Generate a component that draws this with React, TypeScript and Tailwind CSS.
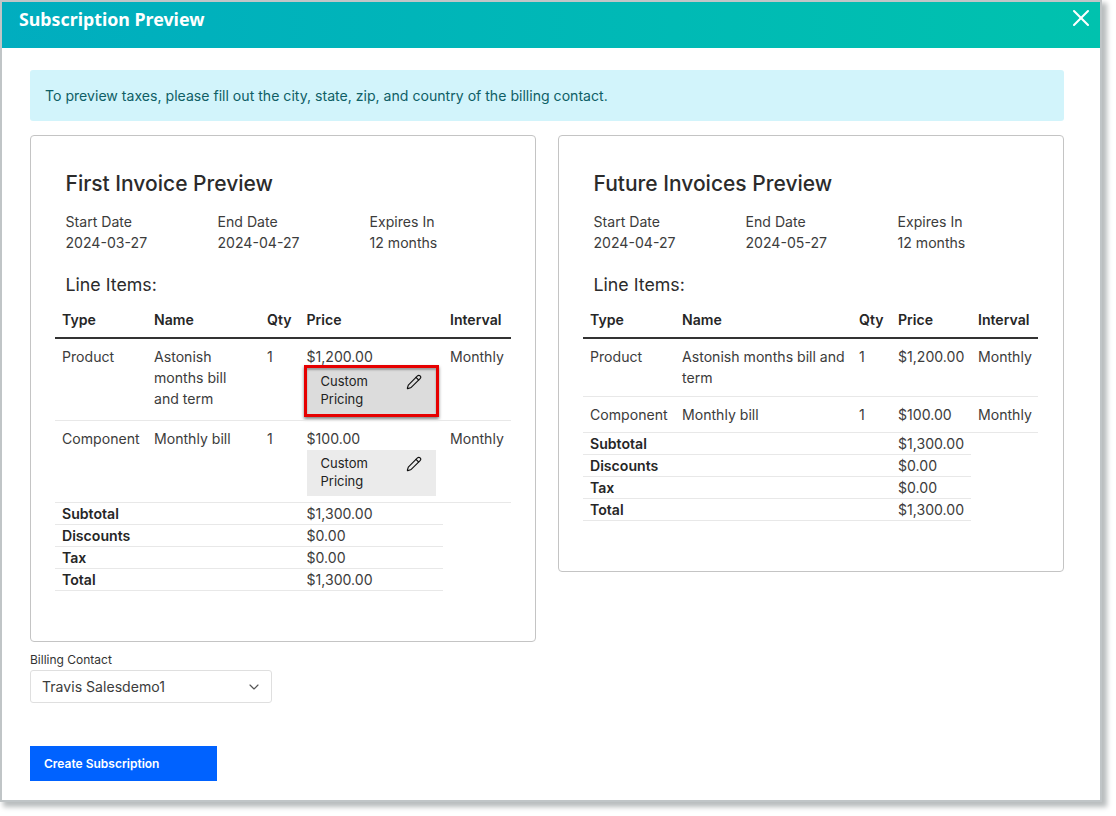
import { ChevronDown, Pencil, X } from "lucide-react"

type Item = { type: string; name: string; price: string; interval: string }

const totals = [
  { label: "Subtotal", value: "$1,300.00" },
  { label: "Discounts", value: "$0.00" },
  { label: "Tax", value: "$0.00" },
  { label: "Total", value: "$1,300.00" },
]

const items: Item[] = [
  { type: "Product", name: "Astonish months bill and term", price: "$1,200.00", interval: "Monthly" },
  { type: "Component", name: "Monthly bill", price: "$100.00", interval: "Monthly" },
]

const CustomPricing = ({ highlighted }: { highlighted?: boolean }) => (
  <div
    className={
      "mt-[1px] mb-[6px] flex h-[46px] w-[129px] items-start justify-between pl-[14px] pr-[14px] pt-[1px] text-[13px] leading-[18px] text-[#222] " +
      (highlighted
        ? "bg-[#dcdcdc] outline-[3px] outline-[#e60000] shadow-[0_2px_3px_3px_rgba(0,0,0,0.5),inset_0_2px_2px_rgba(0,0,0,0.3)]"
        : "bg-[#ebebeb]")
    }
  >
    <span className="w-[60px] pt-[3px]">Custom Pricing</span>
    <Pencil size={16} strokeWidth={1.7} className="mt-[5px] text-[#111]" />
  </div>
)

const InvoiceTable = ({ widths, editable }: { widths: number[]; editable?: boolean }) => (
  <table className="border-collapse table-fixed text-[14.1px] leading-[21px] text-[#3c3c3c]" style={{ width: widths.reduce((a, b) => a + b, 0) }}>
    <colgroup>
      {widths.map((w, i) => (
        <col key={i} style={{ width: w }} />
      ))}
    </colgroup>
    <thead>
      <tr className="border-b-[2px] border-[#333] text-left text-[#262626]">
        <th className="h-[36px] px-[7px] font-semibold">Type</th>
        <th className="px-[7px] font-semibold">Name</th>
        <th className="px-[7px] font-semibold">Qty</th>
        <th className="px-[7px] font-semibold">Price</th>
        <th className="px-[7px] font-semibold">Interval</th>
      </tr>
    </thead>
    <tbody>
      {items.map((item, i) => (
        <tr key={item.type} className="border-b border-[#e8e8e8] align-top">
          <td className="px-[7px] pt-[7px] pb-[7px]">{item.type}</td>
          <td className={"px-[7px] pt-[7px] " + (i === 0 ? "pb-[8px]" : "pb-[7px]")}>{item.name}</td>
          <td className="px-[7px] pt-[7px] pb-[7px]">1</td>
          <td className="px-[7px] pt-[7px] pb-0">
            {item.price}
            {editable && <CustomPricing highlighted={i === 0} />}
          </td>
          <td className="px-[7px] pt-[7px] pb-[7px]">{item.interval}</td>
        </tr>
      ))}
      {totals.map((row) => (
        <tr key={row.label} className="h-[22px]">
          <td colSpan={3} className="border-b border-[#e8e8e8] px-[7px] py-0 font-semibold text-[#262626]">
            {row.label}
          </td>
          <td className="border-b border-[#e8e8e8] px-[7px] py-0">{row.value}</td>
          <td />
        </tr>
      ))}
    </tbody>
  </table>
)

const PreviewCard = ({
  title,
  start,
  end,
  widths,
  height,
  editable,
}: {
  title: string
  start: string
  end: string
  widths: number[]
  height: string
  editable?: boolean
}) => (
  <div className={"w-[506px] rounded-[4px] border border-[#c4c4c4] pt-[34px] pl-[24px] " + height}>
    <h2 className="pl-[10.5px] text-[21px] font-medium leading-[28px] text-[#2b2b2b]">{title}</h2>
    <div className="mt-[13px] grid w-[390px] grid-cols-[152px_152px_1fr] pl-[10.5px] text-[14.1px] leading-[21px] text-[#3c3c3c]">
      <div>
        <div>Start Date</div>
        <div>{start}</div>
      </div>
      <div>
        <div>End Date</div>
        <div>{end}</div>
      </div>
      <div>
        <div>Expires In</div>
        <div>12 months</div>
      </div>
    </div>
    <div className="mt-[20px] pl-[10.5px] text-[17.8px] leading-[24px] text-[#2b2b2b]">Line Items:</div>
    <div className="mt-[5px]">
      <InvoiceTable widths={widths} editable={editable} />
    </div>
  </div>
)

export default function App() {
  return (
    <div className="h-[816px] w-[1116px] overflow-hidden bg-white pl-[2px] pt-[2px] font-['Inter',sans-serif]">
      <div className="flex h-[798px] w-[1098px] flex-col bg-white shadow-[0_0_0_2px_#c0c5c7,4px_4px_5px_3px_rgba(185,189,190,1)]">
        <header className="flex h-[46px] shrink-0 items-start justify-between bg-gradient-to-r from-[#01adbf] to-[#00c2ae] pl-[17px] pr-[5px]">
          <span className="pt-[5px] font-['Noto_Sans',sans-serif] text-[17.8px] font-bold leading-[24px] text-white">
            Subscription Preview
          </span>
          <X size={28} strokeWidth={1.8} className="mt-[2px] text-white" />
        </header>
        <main className="flex flex-1 flex-col pl-[28px] pr-[36px] pt-[22px]">
          <div className="flex h-[51px] items-center rounded-[3px] bg-[#d2f4fb] pl-[15px] text-[14.1px] text-[#0f5f66]">
            To preview taxes, please fill out the city, state, zip, and country of the billing contact.
          </div>
          <div className="mt-[14px] flex items-start gap-[22px]">
            <PreviewCard
              title="First Invoice Preview"
              start="2024-03-27"
              end="2024-04-27"
              widths={[92, 113, 39.5, 143.5, 68]}
              height="h-[507px]"
              editable
            />
            <PreviewCard
              title="Future Invoices Preview"
              start="2024-04-27"
              end="2024-05-27"
              widths={[92, 177, 39, 80, 67]}
              height="h-[437px]"
            />
          </div>
          <label className="mt-[10px] text-[12px] leading-[16px] text-[#333]">Billing Contact</label>
          <div className="mt-[2px] flex h-[33px] w-[242px] items-center justify-between rounded-[3px] border border-[#dfdfdf] pl-[11px] pr-[9px] text-[14.1px] text-[#3c3c3c]">
            <span>Travis Salesdemo1</span>
            <ChevronDown size={16} strokeWidth={1.75} className="text-[#555]" />
          </div>
          <button className="mt-[43px] flex h-[35px] w-[187px] items-center bg-[#0062ff] pl-[14px] text-[12px] font-semibold text-white">
            Create Subscription
          </button>
        </main>
      </div>
    </div>
  )
}
